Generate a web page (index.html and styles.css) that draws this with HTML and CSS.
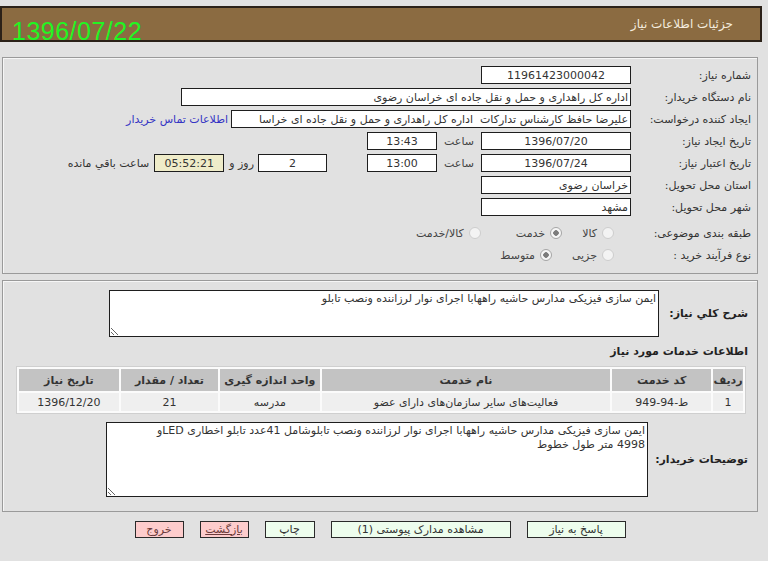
FILE: index.html
```html
<!DOCTYPE html>
<html lang="fa" dir="rtl">
<head>
<meta charset="utf-8">
<title>جزئیات اطلاعات نیاز</title>
<link rel="stylesheet" href="styles.css">
</head>
<body>
<div class="page">
  <div class="titlebar">
    <span class="title">جزئیات اطلاعات نیاز</span>
    <span class="date">1396/07/22</span>
  </div>

  <div class="panel p1">
    <div class="row">
      <span class="label">شماره نیاز:</span>
      <span class="field w150 center">11961423000042</span>
    </div>
    <div class="row">
      <span class="label">نام دستگاه خریدار:</span>
      <span class="field w450">اداره کل راهداری و حمل و نقل جاده ای خراسان رضوی</span>
    </div>
    <div class="row">
      <span class="label">ایجاد کننده درخواست:</span>
      <span class="field w400">علیرضا حافظ کارشناس تدارکات&nbsp; اداره کل راهداری و حمل و نقل جاده ای خراسا</span>
      <a class="link" href="#">اطلاعات تماس خریدار</a>
    </div>
    <div class="row">
      <span class="label">تاریخ ایجاد نیاز:</span>
      <span class="field w150 center">1396/07/20</span>
      <span class="hour">ساعت</span>
      <span class="field w70 center">13:43</span>
    </div>
    <div class="row">
      <span class="label">تاریخ اعتبار نیاز:</span>
      <span class="field w150 center">1396/07/24</span>
      <span class="hour">ساعت</span>
      <span class="field w70 center">13:00</span>
      <span class="field w69 center days">2</span>
      <span class="txt-day">روز و</span>
      <span class="field w70 center remain">05:52:21</span>
      <span class="txt-remain">ساعت باقي مانده</span>
    </div>
    <div class="row">
      <span class="label">استان محل تحویل:</span>
      <span class="field w150">خراسان رضوی</span>
    </div>
    <div class="row">
      <span class="label">شهر محل تحویل:</span>
      <span class="field w150">مشهد</span>
    </div>
    <div class="row radio-row first-radio">
      <span class="label">طبقه بندی موضوعی:</span>
      <span class="options">
        <span class="opt"><span class="radio"></span>کالا</span>
        <span class="opt"><span class="radio on"></span>خدمت</span>
        <span class="opt opt3"><span class="radio"></span>کالا/خدمت</span>
      </span>
    </div>
    <div class="row radio-row">
      <span class="label">نوع فرآیند خرید :</span>
      <span class="options">
        <span class="opt"><span class="radio"></span>جزیی</span>
        <span class="opt"><span class="radio on"></span>متوسط</span>
      </span>
    </div>
  </div>

  <div class="panel p2">
    <div class="desc-row">
      <span class="blabel w-desc">شرح کلي نياز:</span>
      <textarea class="area area1" readonly>ایمن سازی فیزیکی مدارس حاشیه راههابا اجرای نوار لرزاننده ونصب تابلو</textarea>
    </div>
    <div class="heading">اطلاعات خدمات مورد نياز</div>
    <table class="grid">
      <thead>
        <tr>
          <th class="c1">ردیف</th>
          <th class="c2">کد خدمت</th>
          <th class="c3">نام خدمت</th>
          <th class="c4">واحد اندازه گیری</th>
          <th class="c5">تعداد / مقدار</th>
          <th class="c6">تاریخ نیاز</th>
        </tr>
      </thead>
      <tbody>
        <tr>
          <td>1</td>
          <td>ط-94-949</td>
          <td>فعالیت‌های سایر سازمان‌های دارای عضو</td>
          <td>مدرسه</td>
          <td>21</td>
          <td>1396/12/20</td>
        </tr>
      </tbody>
    </table>
    <div class="desc-row buyer">
      <span class="blabel w-buyer">توضیحات خریدار:</span>
      <textarea class="area area2" readonly>ایمن سازی فیزیکی مدارس حاشیه راههابا اجرای نوار لرزاننده ونصب تابلوشامل 41عدد تابلو اخطاری LEDو
4998 متر طول خطوط</textarea>
    </div>
  </div>

  <div class="buttons">
    <button class="btn green b-reply">پاسخ به نیاز</button>
    <button class="btn green b-docs">مشاهده مدارک پیوستی (1)</button>
    <button class="btn green b-print">چاپ</button>
    <button class="btn pink b-back">بازگشت</button>
    <button class="btn pink b-exit">خروج</button>
  </div>
</div>
</body>
</html>
```

FILE: styles.css
```css
html, body {
  margin: 0;
  padding: 0;
  background: #e1e1e1;
}
body {
  font-family: "DejaVu Sans", "Noto Sans", sans-serif;
  font-size: 11px;
  color: #222;
}
.page {
  width: 768px;
  height: 561px;
  overflow: hidden;
  padding-top: 6px;
  box-sizing: border-box;
}

/* title bar */
.titlebar {
  width: 762px;
  height: 36px;
  box-sizing: border-box;
  margin-right: 6px;
  background: #8b6b41;
  border: 2px solid #2b2118;
  display: flex;
  justify-content: space-between;
  align-items: flex-start;
}
.title {
  color: #f4ecdf;
  font-size: 12px;
  margin-right: 27px;
  margin-top: 9px;
}
.date {
  font-family: "Liberation Sans", Arial, sans-serif;
  font-size: 25px;
  line-height: 29px;
  color: #22f522;
  margin-left: 10px;
  margin-top: 9px;
  letter-spacing: 0.5px;
}

/* panels */
.panel {
  border: 1px solid #9a9a9a;
  box-shadow: inset 1px 1px 0 #f6f6f6;
  margin-right: 10px;
  margin-left: 2px;
  width: 756px;
  box-sizing: border-box;
}
.p1 {
  margin-top: 15px;
  padding: 6px 6px 7px 0;
}
.row {
  display: flex;
  align-items: center;
  height: 22px;
}
.label {
  width: 120px;
  flex: none;
  color: #333;
}
.field {
  display: block;
  flex: none;
  height: 18px;
  line-height: 17px;
  box-sizing: border-box;
  border: 1px solid #1e1e1e;
  background: #fff;
  padding: 0 2px;
  white-space: nowrap;
  overflow: hidden;
  color: #333;
}
.center { text-align: center; }
.w150 { width: 150px; }
.w450 { width: 450px; }
.w400 { width: 400px; }
.w70 { width: 70px; }
.w69 { width: 69px; }
.link {
  color: #3434c4;
  text-decoration: none;
  margin-right: 3px;
}
.hour {
  width: 44px;
  text-align: center;
  color: #444;
}
.days { margin-right: 40px; }
.txt-day { margin: 0 4px 0 5px; color: #333; }
.remain { background: #efecc9; }
.txt-remain { margin-right: 5px; color: #333; }

.first-radio { margin-top: 4px; }
.radio-row { height: 22px; }
.options {
  display: flex;
  align-items: center;
  padding-right: 17px;
  gap: 20px;
  color: #444;
}
.opt {
  display: flex;
  align-items: center;
  gap: 5px;
}
.opt3 { margin-right: 15px; }
.radio {
  width: 12px;
  height: 12px;
  box-sizing: border-box;
  border-radius: 50%;
  border: 1px solid #cdcdcd;
  background: #f3f3f3;
}
.radio.on {
  border-color: #a6a6a6;
  background: radial-gradient(circle, #7c7c7c 0 2.5px, #f6f6f6 3px);
}

/* panel 2 */
.p2 {
  margin-top: 6px;
  padding: 9px 9px 14px 0;
}
.desc-row {
  display: flex;
  align-items: center;
}
.blabel {
  font-weight: bold;
  font-size: 11px;
  color: #222;
  flex: none;
  white-space: nowrap;
}
.w-desc { width: 89px; }
.w-buyer { width: 100px; }
.area {
  display: block;
  box-sizing: border-box;
  border: 1px solid #1e1e1e;
  background: #fff;
  font-family: "DejaVu Sans", sans-serif;
  font-size: 11px;
  line-height: 14px;
  color: #333;
  padding: 1px 2px;
  margin: 0;
  resize: both;
  overflow: hidden;
}
.area1 { width: 550px; height: 47px; }
.area2 { width: 542px; height: 75px; }
.heading {
  font-weight: bold;
  font-size: 11px;
  color: #222;
  height: 20px;
  line-height: 20px;
  margin-top: 5px;
}
.grid {
  width: 730px;
  margin: 4px 2px 0 0;
  border-collapse: separate;
  border-spacing: 2px;
  background: #fbfbfb;
  border: 1px solid #cfcfcf;
  font-size: 11px;
}
.grid th {
  background: #c3c3c3;
  color: #333;
  font-weight: bold;
  height: 22px;
  padding: 0;
}
.grid td {
  background: #efefef;
  color: #333;
  text-align: center;
  height: 18px;
  padding: 0;
}
.c1 { width: 30px; }
.c2 { width: 99px; }
.c3 { width: 291px; }
.c4 { width: 100px; }
.c5 { width: 98px; }
.c6 { width: 100px; }
.buyer { margin-top: 8px; }

/* buttons */
.buttons {
  width: 760px;
  margin-right: 8px;
  display: flex;
  justify-content: center;
  gap: 16px;
  margin-top: 9px;
}
.btn {
  height: 17px;
  box-sizing: border-box;
  border: 1px solid #2a2a2a;
  font-family: "DejaVu Sans", sans-serif;
  font-size: 11px;
  line-height: 14px;
  padding: 0;
  color: #333;
}
.green { background: #edfded; }
.pink { background: #fdcccc; color: #6b3b3b; }
.b-reply { width: 99px; }
.b-docs { width: 180px; }
.b-print { width: 50px; }
.b-back { width: 49px; text-decoration: underline; }
.b-exit { width: 49px; }
```
